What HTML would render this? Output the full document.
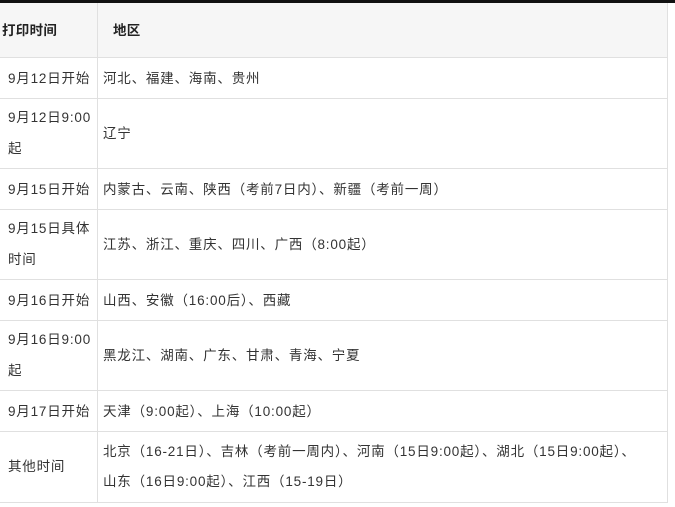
<!DOCTYPE html>
<html><head><meta charset="utf-8"><style>
body{margin:0;width:675px;height:507px;background:#fff;position:relative;overflow:hidden;font-family:"Liberation Sans","Noto Sans CJK SC",sans-serif;color:#333;font-size:13.5px}
.bar{position:absolute;left:0;top:0;width:675px;height:3px;background:#111}
.hd{position:absolute;left:0;top:3px;width:667px;height:54px;background:#f6f6f6}
.h{position:absolute;left:0;width:667px;height:1px;background:#e0e0e0}
.v{position:absolute;width:1px;background:#e0e0e0}
.t{position:absolute;white-space:nowrap;line-height:34px;letter-spacing:0.8px;font-feature-settings:"halt" 0}
.b{font-weight:bold;color:#222;letter-spacing:0.3px}
</style></head><body>
<div class="bar"></div>
<div class="hd"></div>
<div class="h" style="top:57px"></div>
<div class="h" style="top:98px"></div>
<div class="h" style="top:168px"></div>
<div class="h" style="top:209px"></div>
<div class="h" style="top:279px"></div>
<div class="h" style="top:320px"></div>
<div class="h" style="top:390px"></div>
<div class="h" style="top:431px"></div>
<div class="h" style="top:502px"></div>
<div class="v" style="left:97px;top:3px;height:500px"></div>
<div class="v" style="left:667px;top:3px;height:500px"></div>

<div class="t b" style="left:2px;top:14px">打印时间</div>
<div class="t b" style="left:113px;top:14px">地区</div>

<div class="t" style="left:8px;top:62px">9月12日开始</div>
<div class="t" style="left:103px;top:62px">河北、福建、海南、贵州</div>

<div class="t" style="left:8px;top:101px">9月12日9:00</div>
<div class="t" style="left:8px;top:132px">起</div>
<div class="t" style="left:103px;top:117px">辽宁</div>

<div class="t" style="left:8px;top:173px">9月15日开始</div>
<div class="t" style="left:103px;top:173px">内蒙古、云南、陕西（考前7日内）、新疆（考前一周）</div>

<div class="t" style="left:8px;top:212px">9月15日具体</div>
<div class="t" style="left:8px;top:243px">时间</div>
<div class="t" style="left:103px;top:228px">江苏、浙江、重庆、四川、广西（8:00起）</div>

<div class="t" style="left:8px;top:284px">9月16日开始</div>
<div class="t" style="left:103px;top:284px">山西、安徽（16:00后）、西藏</div>

<div class="t" style="left:8px;top:323px">9月16日9:00</div>
<div class="t" style="left:8px;top:354px">起</div>
<div class="t" style="left:103px;top:339px">黑龙江、湖南、广东、甘肃、青海、宁夏</div>

<div class="t" style="left:8px;top:395px">9月17日开始</div>
<div class="t" style="left:103px;top:395px">天津（9:00起）、上海（10:00起）</div>

<div class="t" style="left:8px;top:450px">其他时间</div>
<div class="t" style="left:103px;top:435px">北京（16-21日）、吉林（考前一周内）、河南（15日9:00起）、湖北（15日9:00起）、</div>
<div class="t" style="left:103px;top:465px">山东（16日9:00起）、江西（15-19日）</div>
</body></html>
